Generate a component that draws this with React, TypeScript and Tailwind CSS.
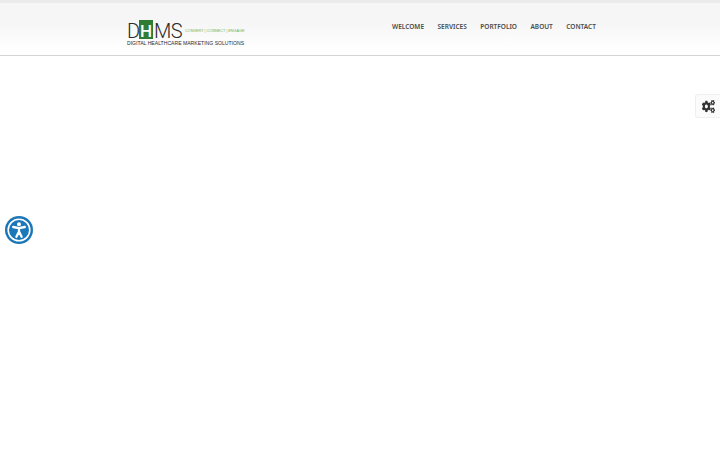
import React from "react";
import { FaCogs } from "react-icons/fa";

const navItems = ["WELCOME", "SERVICES", "PORTFOLIO", "ABOUT", "CONTACT"];

function Logo() {
  return (
    <div className="flex w-[118px] flex-col font-['Liberation_Sans',sans-serif] text-[#2a2a2a]">
      <div className="flex h-[19px] items-end">
        <span className="w-[12px] font-['Roboto',sans-serif] text-[20px] leading-[16px] font-light">D</span>
        <span className="flex h-[19px] w-[14px] items-end justify-center bg-[#2f7d32] font-['Roboto',sans-serif] text-[17px] leading-[15px] font-medium text-white">
          H
        </span>
        <span className="ml-[1px] w-[31px] font-['Roboto',sans-serif] text-[20px] leading-[16px] font-light tracking-[-0.6px]">
          MS
        </span>
        <span className="mb-[5px] text-[3.8px] leading-none whitespace-nowrap text-[#6bb35a]">
          CONVERT | CONNECT | ENGAGE
        </span>
      </div>
      <span className="mt-[0.5px] text-[5.1px] leading-[6px] whitespace-nowrap">
        DIGITAL HEALTHCARE MARKETING SOLUTIONS
      </span>
    </div>
  );
}

function AccessIcon() {
  return (
    <svg viewBox="0 0 28 28" className="h-[28px] w-[28px]">
      <circle cx="14" cy="14" r="14" fill="#1b77b8" />
      <circle cx="14" cy="14" r="10.8" fill="none" stroke="#fff" strokeWidth="1.6" />
      <circle cx="14" cy="8.3" r="2" fill="#fff" />
      <path
        d="M8.2 11 14 12.2l5.8-1.2M14 12.2v3.6M14 15.5l-2.6 5.3M14 15.5l2.6 5.3"
        fill="none"
        stroke="#fff"
        strokeWidth="2.3"
        strokeLinecap="round"
        strokeLinejoin="round"
      />
    </svg>
  );
}

export default function App() {
  return (
    <div className="relative h-[450px] w-[720px] overflow-hidden bg-white font-['Noto_Sans',sans-serif]">
      <header className="h-[56px] border-t-[3px] border-b border-t-[#ebebeb] border-b-[#d4d4d4] bg-linear-to-b from-[#f6f6f6] from-40% to-white to-90%">
        <div className="flex items-start pl-[127px] pt-[17px]">
          <Logo />
          <nav className="ml-[147px] flex gap-[13.5px] pt-[2px]">
            {navItems.map((item) => (
              <a key={item} className="text-[6.5px] leading-[10px] font-semibold text-[#4a4a4a]">
                {item}
              </a>
            ))}
          </nav>
        </div>
      </header>

      <div className="absolute top-[94px] right-0 flex h-[24px] w-[25px] items-center rounded-l-[3px] border border-r-0 border-[#efefef] bg-[#fbfbfb] pl-[6px]">
        <FaCogs preserveAspectRatio="none" className="h-[13px] w-[13px] text-[#333]" />
      </div>

      <button className="absolute top-[216px] left-[5px] flex h-[28px] w-[28px] items-center justify-center rounded-full">
        <AccessIcon />
      </button>
    </div>
  );
}
